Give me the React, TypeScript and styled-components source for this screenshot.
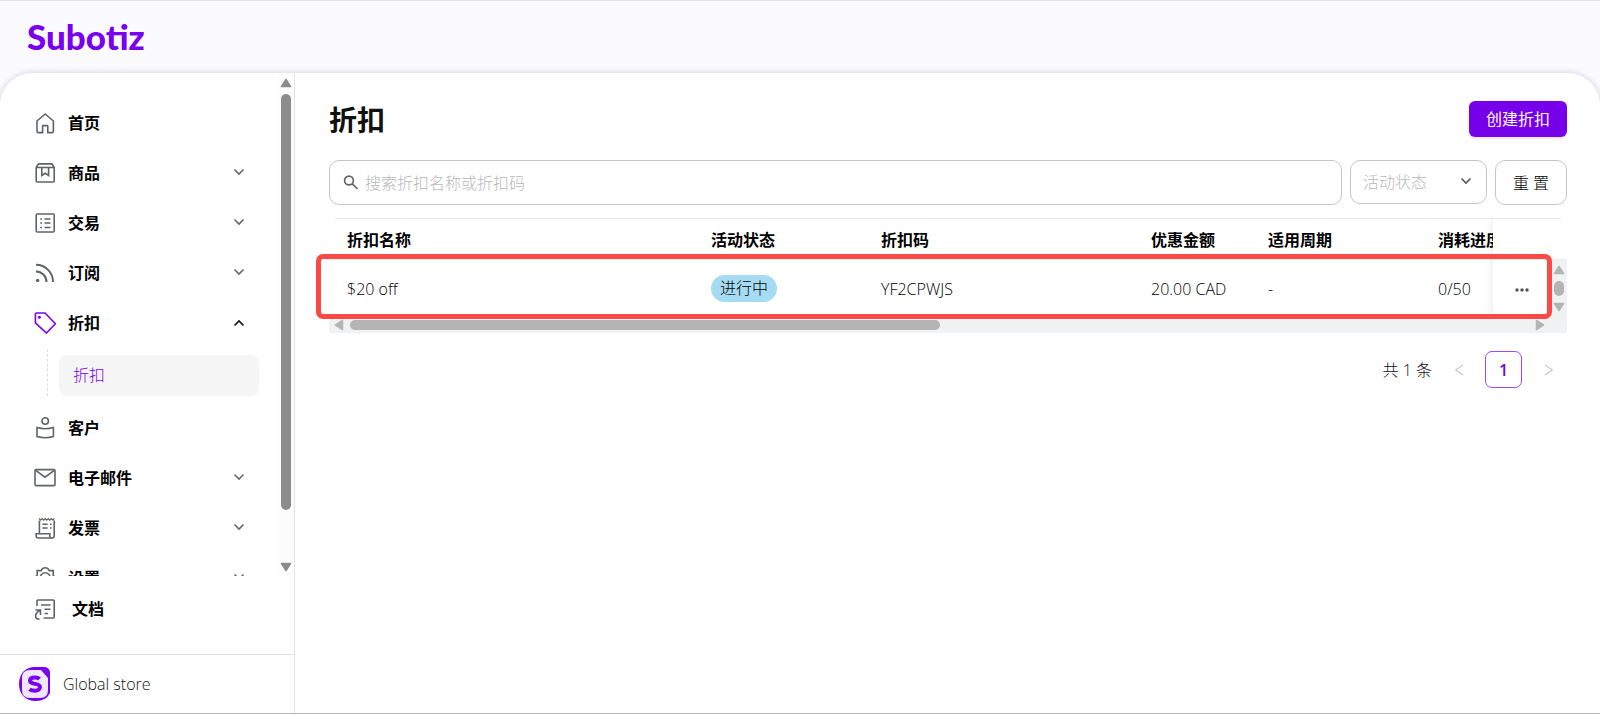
import React from "react";
import styled, { createGlobalStyle, css } from "styled-components";

const GlobalStyle = createGlobalStyle`
  * { box-sizing: border-box; }
  body {
    margin: 0;
    color: #111;
    font: 300 16px/24px "Open Sans", "Noto Sans CJK SC", sans-serif;
    background: #fbfaff;
  }
  button, input, select { font: inherit; color: inherit; }
  ul { list-style: none; margin: 0; padding: 0; }
  a { color: inherit; text-decoration: none; }
`;

const Page = styled.div`
  display: flex;
  flex-direction: column;
  height: 100vh;
  border-top: 1px solid #e4e3e7;
  border-bottom: 1px solid #cbc6b6;
`;

const Header = styled.header`
  flex: none;
  display: flex;
  align-items: center;
  height: 72px;
  padding: 0 27px 2px;
`;

const Logo = styled.a`
  color: #7a00f0;
  font: 900 35px/40px Lato, sans-serif;
`;

const Panel = styled.div`
  flex: 1;
  min-height: 0;
  display: flex;
  overflow: hidden;
  background: #fff;
  border-radius: 32px 32px 0 0;
  box-shadow: 0 0 6px rgba(30, 20, 60, 0.2);
`;

const Sidebar = styled.aside`
  flex: none;
  display: flex;
  flex-direction: column;
  width: 295px;
  border-right: 1px solid #e3e3e3;
`;

const MenuArea = styled.div`
  flex: 1;
  min-height: 0;
  display: flex;
`;

const Menu = styled.nav`
  flex: 1;
  overflow: hidden;
  padding: 25px 33px 0 34px;
`;

const MenuLink = styled.a<{ $wide?: boolean }>`
  display: flex;
  align-items: center;
  gap: ${(p) => (p.$wide ? 16 : 12)}px;
  height: 50px;
  font-weight: 700;
  color: #000;
`;

const Label = styled.span`
  flex: 1;
`;

const SubList = styled.ul`
  display: flex;
  margin-left: 13px;
  padding: 1px 0 7px;
`;

const SubItem = styled.li`
  flex: 1;
  padding: 6px 0 0 11px;
  border-left: 1px dashed #ddd;
`;

const SubLink = styled.a`
  display: block;
  margin-right: -14px;
  padding: 8px 14px;
  height: 41px;
  border-radius: 8px;
  background: #f5f5f5;
  color: #7a00f0;
`;

const Docs = styled.div`
  flex: none;
  padding: 8px 34px 20px;
`;

const Store = styled.a`
  flex: none;
  display: flex;
  align-items: center;
  gap: 12px;
  height: 59px;
  padding-left: 19px;
  border-top: 1px solid #e3e3e3;
`;

const vertical = css`
  flex-direction: column;
  width: 16px;
  padding: 5px 3px 4px;
`;
const horizontal = css`
  height: 16px;
  padding: 1px 22px 1px 5px;
`;

const Track = styled.div<{ $dir: "v" | "h"; $tone: string }>`
  flex: none;
  display: flex;
  align-items: center;
  gap: 6px;
  background: ${(p) => p.$tone};
  ${(p) => (p.$dir === "v" ? vertical : horizontal)}
`;

const Arrow = styled.svg`
  flex: none;
  display: block;
`;

const Rail = styled.div`
  flex: 1;
  display: flex;
  flex-direction: inherit;
  min-height: 0;
`;

const Thumb = styled.div<{ $size: string; $dir: "v" | "h"; $color: string }>`
  flex: 0 0 ${(p) => p.$size};
  ${(p) => (p.$dir === "v" ? "width: 10px;" : "height: 10px;")}
  border-radius: 5px;
  background: ${(p) => p.$color};
`;

const Main = styled.main`
  flex: 1;
  min-width: 0;
  padding: 28px 33px 0 34px;
`;

const TitleRow = styled.div`
  display: flex;
  justify-content: space-between;
  align-items: flex-start;
`;

const Title = styled.h1`
  margin: 0;
  font-size: 28px;
  line-height: 38px;
  font-weight: 700;
`;

const PrimaryButton = styled.button`
  height: 36px;
  padding: 0 17px;
  border: 0;
  border-radius: 6px;
  background: #7600ea;
  color: #fff;
  font-weight: 400;
  box-shadow: 0 2px 2px rgba(118, 0, 234, 0.12);
`;

const Filters = styled.form`
  display: flex;
  gap: 8px;
  margin-top: 21px;
`;

const field = css`
  height: 45px;
  border: 1px solid #c3c6cc;
  border-radius: 10px;
  background: #fff;
`;

const Search = styled.label`
  ${field}
  flex: 1;
  display: flex;
  align-items: center;
  gap: 6px;
  padding: 0 13px;
`;

const SearchInput = styled.input`
  flex: 1;
  min-width: 0;
  padding: 0;
  border: 0;
  outline: 0;
  background: none;
  &::placeholder { color: #b8b8b8; opacity: 1; }
`;

const SelectBox = styled.div`
  ${field}
  position: relative;
  width: 137px;
  height: 44px;
  svg { position: absolute; right: 14px; top: 15px; pointer-events: none; }
`;

const Select = styled.select`
  width: 100%;
  height: 100%;
  padding: 0 12px;
  border: 0;
  outline: 0;
  appearance: none;
  background: none;
  color: #b8b8b8;
`;

const ResetButton = styled.button`
  ${field}
  width: 72px;
  padding: 0;
  color: #000;
`;

const TableFrame = styled.section`
  position: relative;
  margin-top: 13px;
  color: #000;
`;

const TopRule = styled.div`
  height: 1px;
  margin: 0 6px;
  background: #e6e6e6;
`;

const TableClip = styled.div`
  overflow: hidden;
`;

const Table = styled.table`
  width: 200%;
  table-layout: fixed;
  border-collapse: separate;
  border-spacing: 0;
`;

const Col = styled.col<{ $w?: number }>`
  ${(p) => p.$w && `width: ${p.$w}px;`}
`;

const cell = css`
  padding: 0 18px;
  text-align: left;
  white-space: nowrap;
  background: #fff;
`;

const Th = styled.th`
  ${cell}
  height: 41px;
  padding-top: 1px;
  border-bottom: 1px solid #f3f3f3;
  font-weight: 700;
`;

const Td = styled.td`
  ${cell}
  height: 57px;
`;

const sticky = css`
  position: sticky;
  right: 0;
  padding: 0 16px 0 0;
  text-align: center;
  box-shadow: -3px 0 6px rgba(0, 0, 0, 0.06);
`;

const StickyTh = styled(Th)`${sticky}`;
const StickyTd = styled(Td)`${sticky}`;

const Badge = styled.span`
  display: inline-block;
  height: 27px;
  padding: 0 9px;
  border-radius: 14px;
  background: #a5dbf3;
  line-height: 27px;
`;

const MoreButton = styled.button`
  display: inline-flex;
  padding: 8px;
  border: 0;
  background: none;
  vertical-align: middle;
`;

const BodyScroll = styled.div`
  position: absolute;
  right: 0;
  top: 42px;
  bottom: 0;
  display: flex;
  padding-bottom: 17px;
  background: #f0f1f3;
`;

const Highlight = styled.div`
  position: absolute;
  inset: 36px 15px 14px -13px;
  border: 5px solid #fb4945;
  border-radius: 7px;
  pointer-events: none;
`;

const Pager = styled.nav`
  display: flex;
  justify-content: flex-end;
  align-items: center;
  gap: 8px;
  margin-top: 18px;
`;

const PageButton = styled.button<{ $current?: boolean }>`
  display: flex;
  align-items: center;
  justify-content: center;
  width: 37px;
  height: 37px;
  padding: 0;
  border: 1px solid ${(p) => (p.$current ? "#9a4bf3" : "transparent")};
  border-radius: 7px;
  background: none;
  color: ${(p) => (p.$current ? "#7600ea" : "#b5b5b5")};
  font-weight: 600;
`;

type IconName =
  | "home" | "goods" | "trade" | "feed" | "tag" | "customer"
  | "mail" | "invoice" | "settings" | "docs";

const shapes: Record<IconName, React.ReactNode> = {
  home: <path d="M3 9 11.200 2l8.200 7v10.600a1 1 0 0 1-1 1h-4.600v-6.400a.6.6 0 0 0-.6-.6H9.200a.6.6 0 0 0-.6.6v6.400H4a1 1 0 0 1-1-1V9Z" />,
  goods: (
    <>
      <path d="M2.200 5.500 4 2.500q.4-.6 1-.6h12.400q.6 0 1 .6l1.800 3V19a1 1 0 0 1-1 1h-16a1 1 0 0 1-1-1V5.500Zm0 0h18" />
      <path d="M7.800 5.500v8l3.400-2.200 3.400 2.200v-8" />
    </>
  ),
  trade: (
    <>
      <rect x="2.200" y="2" width="18" height="18" rx="1" />
      <path d="M6.200 7h1.800M6.200 11h1.800M6.200 15.500h1.800M10.500 7h6M10.500 11h6M10.500 15.500h6" />
    </>
  ),
  feed: (
    <g strokeWidth="2">
      <path d="M2 2.800A17 17 0 0 1 19 20M2 9.500A10.500 10.500 0 0 1 12.500 20" />
      <circle cx="3.600" cy="18.400" r="1.700" fill="currentColor" stroke="none" />
    </g>
  ),
  tag: (
    <>
      <path d="M1.400 2a1 1 0 0 1 1-1H11l10.400 10.800-9 9.200L1.400 10.800V2Z" />
      <circle cx="5.400" cy="5.200" r="1.500" fill="currentColor" stroke="none" />
    </>
  ),
  customer: (
    <>
      <circle cx="11.200" cy="4" r="3.200" />
      <path d="M3 10.600q8.200 2.400 16.400 0v9q-8.200 2.400-16.400 0Z" />
    </>
  ),
  mail: (
    <>
      <rect x="1" y="2.600" width="20" height="16" rx="1" />
      <path d="m2 3.600 9 6.600 9-6.600" />
    </>
  ),
  invoice: (
    <>
      <path d="M5.400 16.800V3.400m14.800 0v15.400a2.200 2.200 0 0 1-2.200 2.200H4.200a2 2 0 0 1-2-2v-2.200h13.600v2.200a2.200 2.200 0 0 0 2.200 2.200" />
      <path d="m5 1.400 1.600 1.800 1.600-1.600 1.600 1.600 1.500-1.600 1.500 1.600 1.500-1.600 1.500 1.600 1.500-1.600 1.600 1.600 1.400-1.800" strokeWidth="1.200" />
      <path d="M8.400 7.200h5.200M8.400 11h5.200M16 7.200h1.600M16 11h1.600" />
    </>
  ),
  settings: (
    <>
      <path d="M.8 10.600 3.200 8.200V3.600H7.200Q8.400.8 11.200.8T15.200 3.600h4v4.600l2.200 2.400-2.200 2.800v4.600h-4.400L11.200 21l-3.600-3H3.200v-4.600Z" />
      <circle cx="11.200" cy="10.800" r="5" />
    </>
  ),
  docs: (
    <>
      <path d="M3 8V3a1 1 0 0 1 1-1h15.200a1 1 0 0 1 1 1v16a1 1 0 0 1-1 1H9.500M7 7h9.500M10.500 11.200h6M10.500 15.500h3.500" />
      <path d="M1.500 12h5v5M6.300 12.200Q1.600 14.500 1.600 18q0 3 4 3.200" />
    </>
  ),
};

function MenuIcon({ name, color = "#5f6368" }: { name: IconName; color?: string }) {
  return (
    <svg width="22" height="22" viewBox="0 0 22 22" fill="none" stroke="currentColor" color={color} strokeWidth="1.600" aria-hidden>
      {shapes[name]}
    </svg>
  );
}

function Chevron({ up, color = "#666" }: { up?: boolean; color?: string }) {
  return (
    <svg width="12" height="12" viewBox="0 0 12 12" fill="none" stroke={color} strokeWidth="1.600" aria-hidden>
      <path d={up ? "M1.500 8.500 6 4l4.500 4.500" : "M1.500 2.500 6 7l4.500-4.500"} />
    </svg>
  );
}

const arrowPaths = {
  up: "M6 1.500 10.500 8.500H1.500Z",
  down: "M6 8.500 1.500 1.500h9Z",
  left: "M1.500 6 8.500 1.500v9Z",
  right: "M8.500 6 1.500 1.500v9Z",
};

function ScrollArrow({ dir, color }: { dir: keyof typeof arrowPaths; color: string }) {
  const sideways = dir === "left" || dir === "right";
  const w = sideways ? 10 : 12;
  const h = sideways ? 12 : 10;
  return (
    <Arrow width={w} height={h} viewBox={`0 0 ${w} ${h}`} fill={color} stroke={color} strokeWidth="1.500" strokeLinejoin="round" aria-hidden>
      <path d={arrowPaths[dir]} />
    </Arrow>
  );
}

function Scrollbar({ dir, size, color, tone }: { dir: "v" | "h"; size: string; color: string; tone: string }) {
  return (
    <Track $dir={dir} $tone={tone} aria-hidden>
      <ScrollArrow dir={dir === "v" ? "up" : "left"} color={color} />
      <Rail>
        <Thumb $dir={dir} $size={size} $color={color} />
      </Rail>
      <ScrollArrow dir={dir === "v" ? "down" : "right"} color={color} />
    </Track>
  );
}

const menu: { icon: IconName; label: string; expandable?: boolean; children?: string[] }[] = [
  { icon: "home", label: "首页" },
  { icon: "goods", label: "商品", expandable: true },
  { icon: "trade", label: "交易", expandable: true },
  { icon: "feed", label: "订阅", expandable: true },
  { icon: "tag", label: "折扣", expandable: true, children: ["折扣"] },
  { icon: "customer", label: "客户" },
  { icon: "mail", label: "电子邮件", expandable: true },
  { icon: "invoice", label: "发票", expandable: true },
  { icon: "settings", label: "设置", expandable: true },
];

export default function App() {
  return (
    <Page>
      <GlobalStyle />
      <Header>
        <Logo href="#">Subotiz</Logo>
      </Header>
      <Panel>
        <Sidebar>
          <MenuArea>
            <Menu>
              <ul>
                {menu.map((m) => (
                  <li key={m.label}>
                    <MenuLink href="#">
                      <MenuIcon name={m.icon} color={m.children ? "#7a00f0" : undefined} />
                      <Label>{m.label}</Label>
                      {m.expandable && <Chevron up={!!m.children} color={m.children ? "#111" : undefined} />}
                    </MenuLink>
                    {m.children && (
                      <SubList>
                        {m.children.map((c) => (
                          <SubItem key={c}>
                            <SubLink href="#">{c}</SubLink>
                          </SubItem>
                        ))}
                      </SubList>
                    )}
                  </li>
                ))}
              </ul>
            </Menu>
            <Scrollbar dir="v" size="90%" color="#8b8b8b" tone="#fcfcfc" />
          </MenuArea>
          <Docs>
            <MenuLink href="#" $wide>
              <MenuIcon name="docs" />
              <Label>文档</Label>
            </MenuLink>
          </Docs>
          <Store href="#">
            <svg width="32" height="34" viewBox="0 0 32 34" fill="none" aria-hidden>
              <path d="M16 0h10q5 1 5 6v20q-4 8-14 8C6 34 0 27 0 17S6 0 16 0Z" fill="#7a00f0" />
              <path d="M11 3h11l7 8v12q0 8-8 8H11q-8 0-8-8V11q0-8 8-8Z" fill="#eee6fb" />
              <path d="M20.500 12Q19 10.500 16 10.500c-3.500 0-5 1.200-5 3.200 0 4.500 10 1.800 10 6.300 0 2.300-2 3.800-5 3.800q-3.500 0-5.500-1.600" stroke="#7a00f0" strokeWidth="4" />
            </svg>
            Global store
          </Store>
        </Sidebar>
        <Main>
          <TitleRow>
            <Title>折扣</Title>
            <PrimaryButton type="button">创建折扣</PrimaryButton>
          </TitleRow>
          <Filters>
            <Search>
              <svg width="16" height="16" viewBox="0 0 16 16" fill="none" stroke="#666" strokeWidth="1.700" aria-hidden>
                <circle cx="6" cy="5.500" r="4.400" />
                <path d="m9.300 8.800 5.200 5.200" />
              </svg>
              <SearchInput aria-label="搜索" placeholder="搜索折扣名称或折扣码" />
            </Search>
            <SelectBox>
              <Select aria-label="活动状态">
                <option>活动状态</option>
              </Select>
              <Chevron color="#555" />
            </SelectBox>
            <ResetButton type="reset">重 置</ResetButton>
          </Filters>
          <TableFrame>
            <TopRule />
            <TableClip>
              <Table>
                <colgroup>
                  <Col $w={364} />
                  <Col $w={170} />
                  <Col $w={270} />
                  <Col $w={117} />
                  <Col $w={170} />
                  <Col />
                  <Col $w={74} />
                </colgroup>
                <thead>
                  <tr>
                    <Th>折扣名称</Th>
                    <Th>活动状态</Th>
                    <Th>折扣码</Th>
                    <Th>优惠金额</Th>
                    <Th>适用周期</Th>
                    <Th>消耗进度</Th>
                    <StickyTh aria-label="操作" />
                  </tr>
                </thead>
                <tbody>
                  <tr>
                    <Td>$20 off</Td>
                    <Td><Badge>进行中</Badge></Td>
                    <Td>YF2CPWJS</Td>
                    <Td>20.00 CAD</Td>
                    <Td>-</Td>
                    <Td>0/50</Td>
                    <StickyTd>
                      <MoreButton type="button" aria-label="更多">
                        <svg width="14" height="4" viewBox="0 0 14 4" fill="#555" aria-hidden>
                          <circle cx="2" cy="2" r="1.700" /><circle cx="7" cy="2" r="1.700" /><circle cx="12" cy="2" r="1.700" />
                        </svg>
                      </MoreButton>
                    </StickyTd>
                  </tr>
                </tbody>
              </Table>
            </TableClip>
            <Scrollbar dir="h" size="50%" color="#b4b4b4" tone="#f0f1f3" />
            <BodyScroll>
              <Scrollbar dir="v" size="100%" color="#b4b4b4" tone="#f0f1f3" />
            </BodyScroll>
            <Highlight />
          </TableFrame>
          <Pager aria-label="分页">
            <span>共 1 条</span>
            <PageButton type="button" aria-label="上一页">
              <svg width="10" height="12" viewBox="0 0 10 12" fill="none" stroke="currentColor" aria-hidden><path d="M9 1 1.500 6 9 11" /></svg>
            </PageButton>
            <PageButton type="button" $current>1</PageButton>
            <PageButton type="button" aria-label="下一页">
              <svg width="10" height="12" viewBox="0 0 10 12" fill="none" stroke="currentColor" aria-hidden><path d="m1 1 7.500 5L1 11" /></svg>
            </PageButton>
          </Pager>
        </Main>
      </Panel>
    </Page>
  );
}
